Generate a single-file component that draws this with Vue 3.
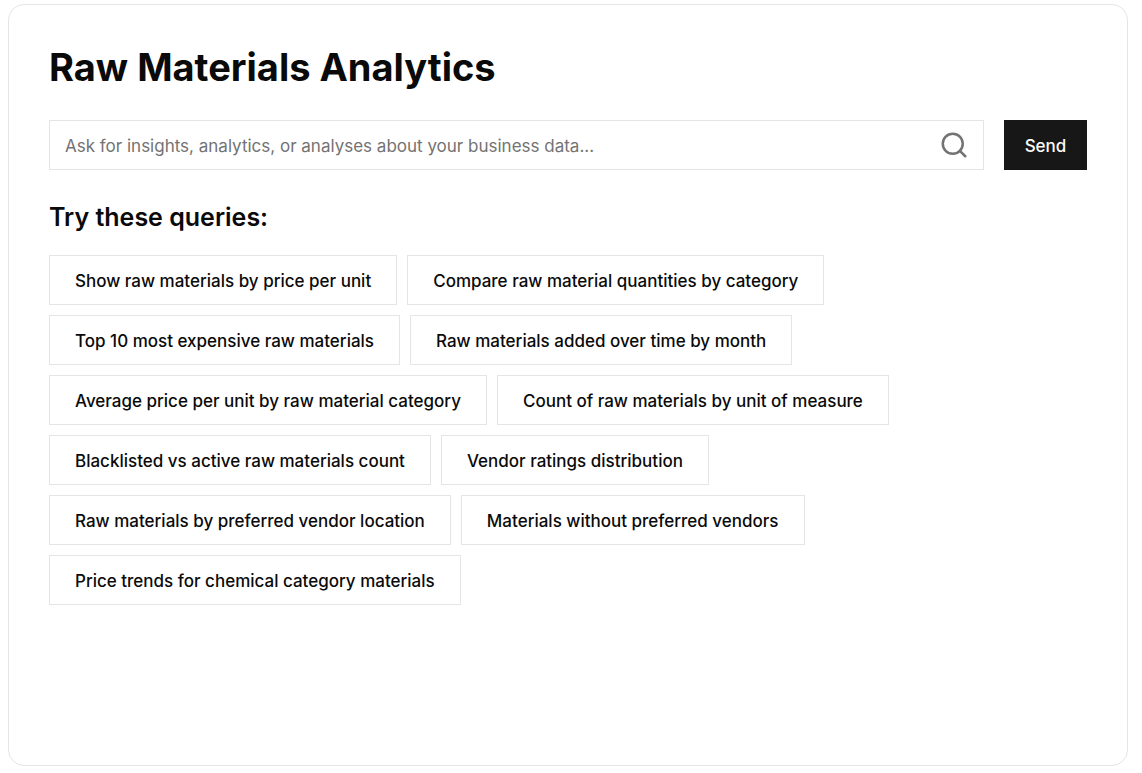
<script setup>
import { ref } from 'vue'

const query = ref('')
const suggestions = [
  'Show raw materials by price per unit',
  'Compare raw material quantities by category',
  'Top 10 most expensive raw materials',
  'Raw materials added over time by month',
  'Average price per unit by raw material category',
  'Count of raw materials by unit of measure',
  'Blacklisted vs active raw materials count',
  'Vendor ratings distribution',
  'Raw materials by preferred vendor location',
  'Materials without preferred vendors',
  'Price trends for chemical category materials',
]
</script>

<template>
  <main class="page">
    <section class="card">
      <h1>Raw Materials Analytics</h1>
      <form class="ask" @submit.prevent>
        <div class="field">
          <input
            v-model="query"
            type="text"
            aria-label="Ask about your business data"
            placeholder="Ask for insights, analytics, or analyses about your business data..."
          />
          <svg class="search" viewBox="0 0 24 24" aria-hidden="true">
            <circle cx="11" cy="11" r="8" />
            <path d="m21 21-4.3-4.3" />
          </svg>
        </div>
        <button class="send" type="submit">Send</button>
      </form>
      <h2>Try these queries:</h2>
      <div class="queries">
        <button
          v-for="item in suggestions"
          :key="item"
          class="chip"
          type="button"
          @click="query = item"
        >{{ item }}</button>
      </div>
    </section>
  </main>
</template>

<style>
body {
  margin: 0;
  background: #fff;
}
</style>

<style scoped>
.page {
  box-sizing: border-box;
  display: flex;
  min-height: 100vh;
  padding: 4px 14px 7px 8px;
  font-family: Inter, 'Liberation Sans', sans-serif;
  color: #0a0a0a;
}

.card {
  box-sizing: border-box;
  flex: 1;
  min-width: 0;
  padding: 40px;
  border: 1px solid #e5e5e5;
  border-radius: 16px;
  background: #fff;
}

h1 {
  margin: 0 0 30px;
  font-size: 38px;
  font-weight: 700;
  line-height: 45px;
}

.ask {
  display: flex;
  gap: 20px;
}

.field {
  position: relative;
  flex: 1;
  min-width: 0;
}

input {
  box-sizing: border-box;
  width: 100%;
  height: 50px;
  padding: 2px 60px 0 15px;
  border: 1px solid #e5e5e5;
  border-radius: 0;
  background: #fff;
  color: inherit;
  font: 400 17px/24px Inter, 'Liberation Sans', sans-serif;
}

input::placeholder {
  color: #737373;
  opacity: 1;
}

.search {
  position: absolute;
  top: 10px;
  right: 15px;
  width: 30px;
  height: 30px;
  fill: none;
  stroke: #737373;
  stroke-width: 2;
  stroke-linecap: round;
  stroke-linejoin: round;
  pointer-events: none;
}

button {
  box-sizing: border-box;
  height: 50px;
  margin: 0;
  padding: 2px 20px 0;
  border-radius: 0;
  font: 500 17px/24px Inter, 'Liberation Sans', sans-serif;
  cursor: pointer;
}

.send {
  min-width: 83px;
  border: 0;
  background: #171717;
  color: #fafafa;
}

h2 {
  margin: 30px 0 20px;
  font-size: 25px;
  font-weight: 600;
  line-height: 35px;
}

.queries {
  display: flex;
  flex-wrap: wrap;
  gap: 10px;
  max-width: 860px;
}

.chip {
  padding: 2px 25px 0;
  border: 1px solid #e5e5e5;
  background: #fff;
  color: inherit;
}
</style>
